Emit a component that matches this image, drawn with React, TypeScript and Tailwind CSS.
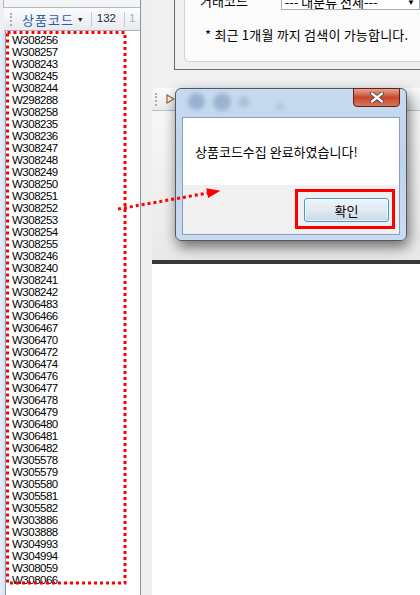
const codes = [
  "W308256", "W308257", "W308243", "W308245", "W308244", "W298288", "W308258",
  "W308235", "W308236", "W308247", "W308248", "W308249", "W308250", "W308251",
  "W308252", "W308253", "W308254", "W308255", "W308246", "W308240", "W308241",
  "W308242", "W306483", "W306466", "W306467", "W306470", "W306472", "W306474",
  "W306476", "W306477", "W306478", "W306479", "W306480", "W306481", "W306482",
  "W305578", "W305579", "W305580", "W305581", "W305582", "W303886", "W303888",
  "W304993", "W304994", "W308059", "W308066",
];

const kr = { fontFamily: '"Noto Sans CJK KR", "Liberation Sans", sans-serif' };
const latin = { fontFamily: '"Liberation Sans", "Noto Sans CJK KR", sans-serif' };

const Grip = ({ h }: { h: string }) => (
  <div className={`w-0 border-l-2 border-dotted border-[#a9b0b8] ${h}`} />
);

const LeftPanel = () => {
  return (
    <div className="w-[141px] h-full flex flex-col border-r border-[#8b949e] shrink-0">
      <div className="h-[8px] bg-[#f4f5f7] border-b border-[#b4bac2] ml-[3px] border-l" />
      <div className="h-[23px] flex items-center bg-gradient-to-b from-[#fcfcfd] to-[#e7eaee] rounded-tl-[4px] ml-[4px] pl-[6px] border-b border-[#aab3bd]">
        <Grip h="h-[13px]" />
        <span className="ml-[10px] text-[13px] tracking-[1px] text-[#2a5cab] leading-none" style={kr}>
          상품코드
        </span>
        <span className="ml-[3px] text-[7px] text-[#222] leading-none">▼</span>
        <div className="ml-[7px] w-px h-[15px] bg-[#c3c9d1]" />
        <span className="ml-[5px] text-[11.5px] text-[#1b2845] leading-none" style={latin}>
          132
        </span>
        <div className="ml-[8px] w-px h-[15px] bg-[#c3c9d1]" />
        <span className="ml-[4px] text-[11.5px] text-[#9db0d2] leading-none" style={latin}>
          1
        </span>
      </div>
      <div className="flex-1 flex min-h-0">
        <div className="w-[6px] bg-gradient-to-r from-[#e7eff9] to-[#d3e2f4] border-r border-[#8d979f]" />
        <div className="flex-1 bg-white pl-[6px] pt-[3px] overflow-hidden">
          {codes.map((c) => (
            <div
              key={c}
              className="h-[12px] leading-[12px] text-[11.5px] tracking-[-0.5px] text-black"
              style={latin}
            >
              {c}
            </div>
          ))}
        </div>
      </div>
    </div>
  );
};

const RightPane = () => {
  return (
    <div className="flex-1 h-full flex flex-col">
      <div className="h-[70px] pl-[22px]">
        <div className="h-full border-l border-b border-[#6c6c6c] pl-[9px]">
          <div className="h-[62px] border-l border-b border-[#cbd3da] rounded-bl-[5px] bg-[#fbfbfb] pl-[15px] overflow-hidden">
            <div className="flex items-end -mt-[7px] h-[17px]">
              <span className="text-[13px] text-black leading-none mb-[3px]" style={kr}>
                거래코드
              </span>
              <div className="ml-[33px] flex-1 h-[17px] border border-[#a9b0b8] bg-white flex items-center pl-[3px] pr-[4px]">
                <span className="text-[13px] leading-none text-black flex-1" style={kr}>
                  --- 대분류 전체---
                </span>
                <span className="text-[8px] text-black">▼</span>
              </div>
            </div>
            <div className="mt-[18px] ml-[5px] text-[13px] tracking-[0.2px] text-black leading-none whitespace-nowrap" style={kr}>
              * 최근 1개월 까지 검색이 가능합니다.
            </div>
          </div>
        </div>
      </div>
      <div className="h-[18px]" />
      <div className="h-[23px] flex items-center rounded-tl-[4px] bg-gradient-to-b from-[#fbfbfc] to-[#e8ebee] border-b border-[#b9bfc6] pl-[3px]">
        <Grip h="h-[13px]" />
        <svg width="9" height="10" viewBox="0 0 9 10" className="ml-[9px]">
          <path d="M1 1 L8 5 L1 9 Z" fill="none" stroke="#a0632a" strokeWidth="1.2" />
        </svg>
      </div>
      <div className="h-[149px] bg-gradient-to-b from-[#f7f7f7] to-[#e9e9e9]" />
      <div className="h-[4px] bg-[#3a3a3a]" />
      <div className="flex-1 bg-white" />
    </div>
  );
};

const Dialog = () => {
  return (
    <div className="absolute left-[175px] top-[88px] w-[232px] h-[153px] rounded-[6px] border border-[#515865] bg-gradient-to-b from-[#c7daf0] via-[#bed4ec] to-[#cadcf0] shadow-[2px_6px_14px_rgba(0,0,0,0.55)] flex flex-col">
      <div className="h-[28px] relative">
        <div className="absolute left-[12px] top-[4px] w-[17px] h-[17px] rounded-full bg-[#98b1ce] blur-[2px]" />
        <div className="absolute left-[37px] top-[4px] w-[18px] h-[18px] rounded-full bg-[#9bb3cf] blur-[2px]" />
        <div className="absolute left-[62px] top-[8px] w-[12px] h-[10px] rounded-full bg-[#abc0d8] blur-[2px]" />
        <div className="absolute left-[100px] top-[14px] w-[8px] h-[7px] rounded-full bg-[#b0c4da] blur-[2px]" />
        <div className="absolute left-[177px] -top-px w-[47px] h-[19px] rounded-b-[4px] border border-[#5b2418] bg-gradient-to-b from-[#e6a190] via-[#c8452c] to-[#d9755d] flex items-center justify-center">
          <svg width="14" height="11" viewBox="0 0 14 11">
            <path d="M2 1.5 L12 9.5 M12 1.5 L2 9.5" stroke="#3a3a3a" strokeWidth="4" strokeLinecap="round" />
            <path d="M2 1.5 L12 9.5 M12 1.5 L2 9.5" stroke="#ffffff" strokeWidth="2.4" strokeLinecap="round" />
          </svg>
        </div>
      </div>
      <div className="mx-[6px] mb-[5px] flex-1 border border-[#8aa0b8] flex flex-col">
        <div className="h-[67px] bg-white flex items-center pl-[12px] pb-[1px]">
          <span className="text-[13px] text-black leading-none whitespace-nowrap" style={kr}>
            상품코드수집 완료하였습니다!
          </span>
        </div>
        <div className="flex-1 bg-[#f0f0f0] flex justify-end pt-[13px] pr-[10px]">
          <button
            className="w-[85px] h-[24px] rounded-[3px] border border-[#3d9bd5] bg-gradient-to-b from-[#eef3f8] via-[#e1eaf2] to-[#c9d8e5] shadow-[inset_0_0_0_1px_rgba(255,255,255,0.7)] text-[13px] text-black leading-none"
            style={kr}
          >
            확인
          </button>
        </div>
      </div>
    </div>
  );
};

const Annotations = () => {
  return (
    <svg className="absolute inset-0 pointer-events-none" width="420" height="595" viewBox="0 0 420 595">
      <rect
        x="7.5"
        y="32.5"
        width="117.5"
        height="550.5"
        fill="none"
        stroke="#ff0000"
        strokeWidth="3"
        strokeDasharray="3 3"
      />
      <line x1="118" y1="209" x2="208" y2="193" stroke="#ff0000" strokeWidth="3" strokeDasharray="3 3" />
      <polygon points="220.5,190.8 206.3,188.2 208.1,198" fill="#ff0000" />
      <rect x="296.5" y="190.5" width="97" height="37" fill="none" stroke="#ff0000" strokeWidth="3" />
    </svg>
  );
};

export default function App() {
  return (
    <div className="relative w-[420px] h-[595px] overflow-hidden bg-[#f0f0f0] flex">
      <LeftPanel />
      <div className="w-[11px] h-full bg-[#efefef] shrink-0" />
      <RightPane />
      <Dialog />
      <Annotations />
    </div>
  );
}
